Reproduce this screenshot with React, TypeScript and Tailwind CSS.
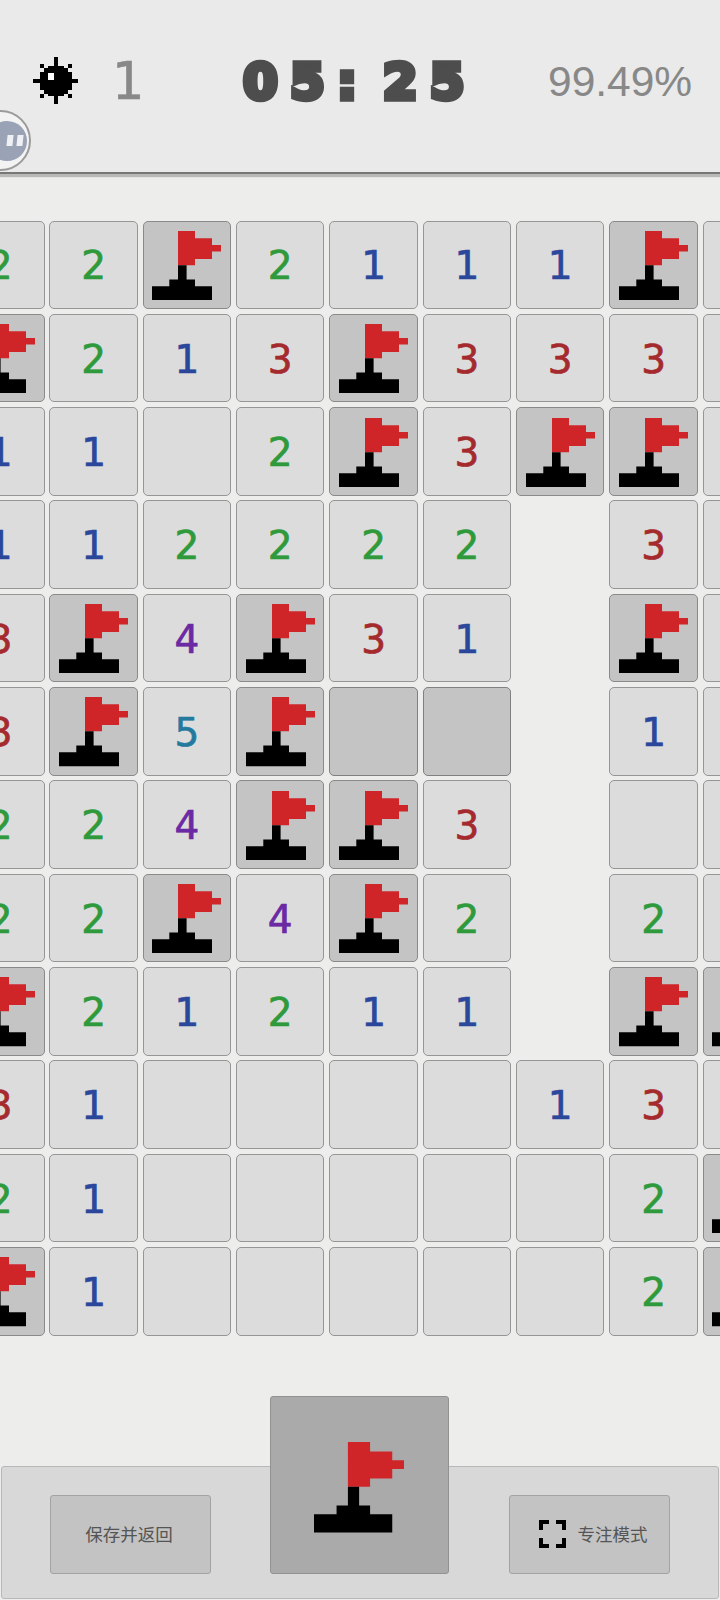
const F = "F";
const E = "";
const G = "G";
const N = null;

const board = [
  [2, 2, F, 2, 1, 1, 1, F, E],
  [F, 2, 1, 3, F, 3, 3, 3, E],
  [1, 1, E, 2, F, 3, F, F, E],
  [1, 1, 2, 2, 2, 2, N, 3, E],
  [3, F, 4, F, 3, 1, N, F, E],
  [3, F, 5, F, G, G, N, 1, E],
  [2, 2, 4, F, F, 3, N, E, E],
  [2, 2, F, 4, F, 2, N, 2, E],
  [F, 2, 1, 2, 1, 1, N, F, F],
  [3, 1, E, E, E, E, 1, 3, E],
  [2, 1, E, E, E, E, E, 2, F],
  [F, 1, E, E, E, E, E, 2, F],
];

const numberColors: Record<number, string> = {
  1: "text-[#2b479b]",
  2: "text-[#2f9a3b]",
  3: "text-[#a52a2e]",
  4: "text-[#6b2aa3]",
  5: "text-[#247a9e]",
};

function FlagIcon({ className }: { className: string }) {
  return (
    <svg viewBox="10 10 69 69.3" className={className}>
      <path fill="#cf2528" d="M36 10h17v7.3h17V24h9v6.6h-9V38H53v6.3H36z" />
      <path fill="#000" d="M36 44.3h8.6v14.3H53v6.7h17v14H10v-14h17.3v-6.7H36z" />
    </svg>
  );
}

function MineIcon() {
  return (
    <svg viewBox="0 0 45 47" className="w-[45px] h-[47px]" shapeRendering="crispEdges">
      <path
        fill="#000"
        d="M21 0h4v9h6v2h4v4h4v7h6v4h-6v7h-4v4h-4v2h-6v8h-4v-8h-6v-2h-4v-4H7v-7H0v-4h7v-7h4v-4h4V9h6z"
      />
      <path fill="#000" d="M7 7h4v4H7zM35 7h4v4h-4zM7 37h4v4H7zM35 37h4v4h-4z" />
      <path fill="#fff" d="M14.5 16H21v7h-6.5z" />
    </svg>
  );
}

function FocusIcon() {
  return (
    <svg viewBox="0 0 27 28" className="w-[27px] h-[28px]" shapeRendering="crispEdges">
      <path
        fill="#000"
        d="M0 0h10v4H4v6H0zM17 0h10v10h-4V4h-6zM0 18h4v6h6v4H0zM23 18h4v10H17v-4h6z"
      />
    </svg>
  );
}

function Cell({ value }: { value: number | string | null }) {
  if (value === null) return <div />;
  if (value === "F") {
    return (
      <div className="flex items-center justify-center rounded-[5px] border-[1.5px] border-[#8a8a8a] bg-[#c4c4c4]">
        <FlagIcon className="w-[69px] h-[69.3px] shrink-0 mt-[1.5px]" />
      </div>
    );
  }
  if (value === "G") {
    return <div className="rounded-[5px] border-[1.5px] border-[#808080] bg-[#c4c4c4]" />;
  }
  return (
    <div
      className={`flex items-center justify-center rounded-[5px] border-[1.5px] border-[#969696] bg-[#dcdcdc] pt-[2px] text-[39px] leading-none font-['DejaVu_Sans',sans-serif] [-webkit-text-stroke:0.7px_currentColor] ${
        typeof value === "number" ? numberColors[value] : ""
      }`}
    >
      {value}
    </div>
  );
}

export default function App() {
  return (
    <div className="relative flex flex-col w-[720px] h-[1600px] overflow-hidden bg-[#ededec]">
      {/* Header */}
      <header className="h-[174px] shrink-0 border-b-2 border-[#777777] bg-[#eaeaea] shadow-[0_3px_1px_rgba(0,0,0,0.22)] pt-[56px] pl-[33px]">
        <div className="flex items-center h-[48px]">
          <MineIcon />
          <span className="ml-[34px] mt-[2px] w-[96px] text-[#888888] text-[51px] leading-none font-['DejaVu_Sans',sans-serif] [-webkit-text-stroke:0.6px_#888888]">
            1
          </span>
          <span className="ml-[35px] mt-[3px] w-[305px] whitespace-pre text-[#4d4d4d] text-[50px] leading-none tracking-[12.2px] [word-spacing:-16px] font-bold font-['DejaVu_Sans',sans-serif] [-webkit-text-stroke:5.5px_#4d4d4d]">
            05: 25
          </span>
          <span className="mt-[5px] text-[#888888] text-[42.5px] leading-none font-['Liberation_Sans',sans-serif]">
            99.49%
          </span>
        </div>
      </header>

      {/* Floating pause button */}
      <div className="absolute left-[-30px] top-[110px] flex items-center justify-end w-[61px] h-[61px] rounded-full border-[2.5px] border-[#9b9b9b] bg-[#f3f3f3] pr-[2px]">
        <div className="flex items-center justify-center gap-[5px] w-[40px] h-[40px] rounded-full bg-[#9aa3b5] pl-[15px]">
          <span className="w-[5.5px] h-[11px] bg-[#eef0f3] skew-x-[-6deg]" />
          <span className="w-[5.5px] h-[11px] bg-[#eef0f3] skew-x-[-6deg]" />
        </div>
      </div>

      {/* Board */}
      <main className="flex-1 pt-[46.5px] ml-[-44px]">
        <div className="grid w-[835px] grid-cols-[repeat(9,88.5px)] auto-rows-[88.5px] gap-[4.83px]">
          {board.flat().map((value, i) => (
            <Cell key={i} value={value} />
          ))}
        </div>
      </main>

      {/* Bottom bar */}
      <footer className="flex items-end justify-between shrink-0 h-[133px] mx-[1px] mb-[1px] rounded-[3px] border border-[#b8b8b8] bg-[#d8d8d8] pl-[47.5px] pr-[48px] pb-[24.5px] text-[#555555] text-[17.5px] font-['Noto_Sans_CJK_SC',sans-serif]">
        <button className="flex items-center justify-center w-[161px] h-[78.5px] rounded-[3px] border border-[#a3a3a3] bg-[#c3c3c3] pr-[2px]">
          保存并返回
        </button>
        <button className="flex items-center justify-center w-[179px] h-[178px] shrink-0 rounded-[3px] border border-[#929292] bg-[#aaaaaa]">
          <FlagIcon className="w-[90px] h-[90.6px] mt-[6px] mr-[2px]" />
        </button>
        <button className="flex items-center justify-center gap-[12px] w-[161px] h-[78.5px] rounded-[3px] border border-[#a3a3a3] bg-[#c3c3c3] pl-[7px]">
          <FocusIcon />
          专注模式
        </button>
      </footer>
    </div>
  );
}
